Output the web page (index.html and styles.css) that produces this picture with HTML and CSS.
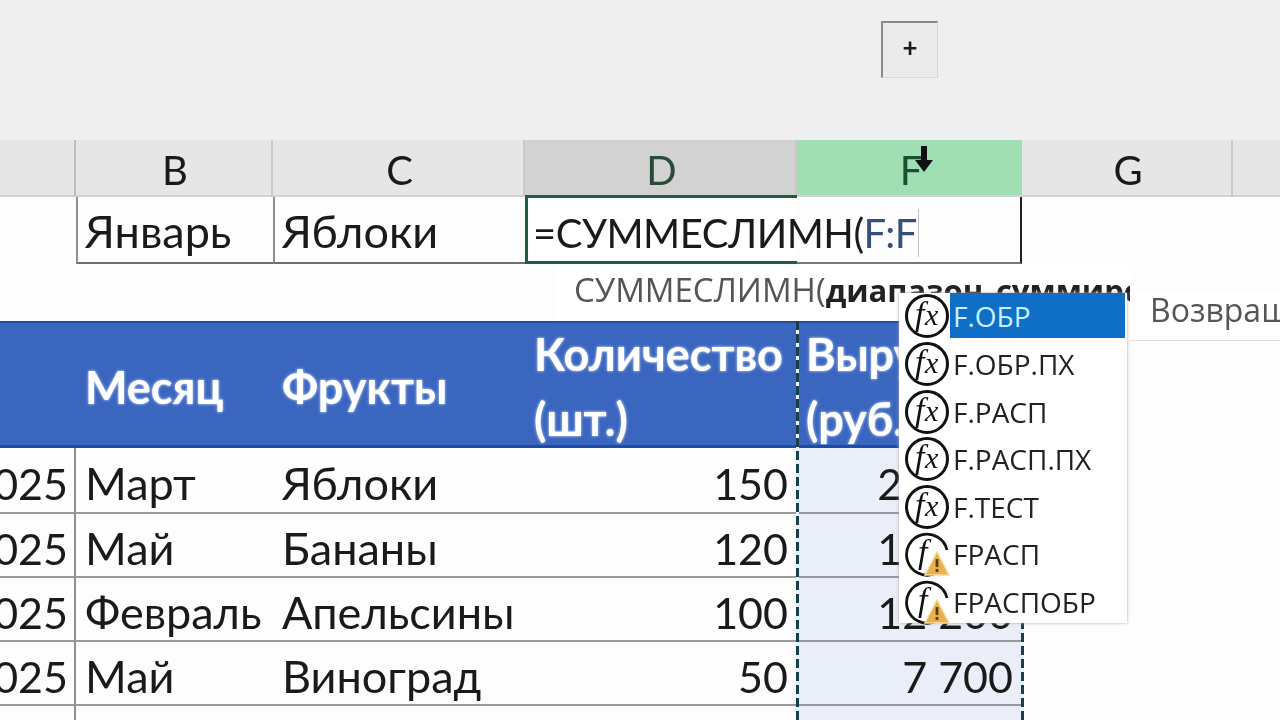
FILE: index.html
```html
<!DOCTYPE html>
<html lang="ru">
<head>
<meta charset="utf-8">
<title>СУММЕСЛИМН</title>
<link rel="stylesheet" href="styles.css">
</head>
<body>
<svg class="icon-defs" width="0" height="0">
  <symbol id="ico-fx" viewBox="0 0 46 46">
    <circle cx="23" cy="23" r="20.5" fill="#fff" stroke="#111" stroke-width="3"/>
    <text x="11" y="32" class="ico-letter">f</text>
    <text x="21" y="32" class="ico-letter ico-x">x</text>
  </symbol>
  <symbol id="ico-warn" viewBox="0 0 46 46">
    <path d="M30 43 A20.5 20.5 0 1 1 43 19" fill="none" stroke="#111" stroke-width="2.8"/>
    <text x="14" y="32" class="ico-letter">f</text>
    <polygon points="33,21 45,44 21,44" fill="#e9b04c" stroke="#f6dc9c" stroke-width="1.5"/>
    <rect x="31.6" y="28" width="2.8" height="8" fill="#5a3d10"/>
    <rect x="31.6" y="38" width="2.8" height="3" fill="#5a3d10"/>
  </symbol>
</svg>

<div class="ribbon">
  <div class="add-btn">+</div>
</div>

<div class="sheet">
  <div class="row col-heads">
    <div class="head"></div>
    <div class="head">B</div>
    <div class="head">C</div>
    <div class="head head-active">D</div>
    <div class="head head-ref">F</div>
    <div class="head">G</div>
    <div class="head"></div>
  </div>

  <div class="row input-row">
    <div class="cell"></div>
    <div class="cell boxed">Январь</div>
    <div class="cell boxed">Яблоки</div>
    <div class="cell edit-cell">=СУММЕСЛИМН(<span class="ref">F:F</span></div>
    <div class="cell edit-tail"></div>
    <div class="cell"></div>
    <div class="cell"></div>
  </div>

  <div class="row gap-row"></div>

  <div class="row table-head">
    <div class="th"></div>
    <div class="th">Месяц</div>
    <div class="th">Фрукты</div>
    <div class="th">Количество<br>(шт.)</div>
    <div class="th">Выручка<br>(руб.)</div>
    <div class="plain"></div>
    <div class="plain"></div>
  </div>

  <div class="row data-row data-first">
    <div class="cell year">2025</div>
    <div class="cell">Март</div>
    <div class="cell">Яблоки</div>
    <div class="cell num">150</div>
    <div class="cell num sum">23 100</div>
    <div class="plain"></div>
    <div class="plain"></div>
  </div>
  <div class="row data-row">
    <div class="cell year">2025</div>
    <div class="cell">Май</div>
    <div class="cell">Бананы</div>
    <div class="cell num">120</div>
    <div class="cell num sum">18 480</div>
    <div class="plain"></div>
    <div class="plain"></div>
  </div>
  <div class="row data-row">
    <div class="cell year">2025</div>
    <div class="cell">Февраль</div>
    <div class="cell">Апельсины</div>
    <div class="cell num">100</div>
    <div class="cell num sum">12 200</div>
    <div class="plain"></div>
    <div class="plain"></div>
  </div>
  <div class="row data-row">
    <div class="cell year">2025</div>
    <div class="cell">Май</div>
    <div class="cell">Виноград</div>
    <div class="cell num">50</div>
    <div class="cell num sum">7 700</div>
    <div class="plain"></div>
    <div class="plain"></div>
  </div>
  <div class="row data-row data-end">
    <div class="cell year"></div>
    <div class="cell"></div>
    <div class="cell"></div>
    <div class="cell"></div>
    <div class="cell sum"></div>
    <div class="plain"></div>
    <div class="plain"></div>
  </div>
</div>

<!-- things lying over the grid -->
<svg class="cursor" viewBox="0 0 18 26"><path d="M6 0h6v14h6L9 26 0 14h6z" fill="#111"/></svg>
<div class="ants ants-left"></div>
<div class="ants ants-right"></div>

<div class="hint">СУММЕСЛИМН(<b>диапазон_суммирования</b></div>

<div class="menu">
  <div class="item item-on"><svg class="ico"><use href="#ico-fx"/></svg><span class="label">F.ОБР</span></div>
  <div class="item"><svg class="ico"><use href="#ico-fx"/></svg><span class="label">F.ОБР.ПХ</span></div>
  <div class="item"><svg class="ico"><use href="#ico-fx"/></svg><span class="label">F.РАСП</span></div>
  <div class="item"><svg class="ico"><use href="#ico-fx"/></svg><span class="label">F.РАСП.ПХ</span></div>
  <div class="item"><svg class="ico"><use href="#ico-fx"/></svg><span class="label">F.ТЕСТ</span></div>
  <div class="item"><svg class="ico"><use href="#ico-warn"/></svg><span class="label">FРАСП</span></div>
  <div class="item"><svg class="ico"><use href="#ico-warn"/></svg><span class="label">FРАСПОБР</span></div>
</div>

<div class="desc">Возвращает</div>
</body>
</html>
```

FILE: styles.css
```css
* {
  box-sizing: border-box;
}

body {
  margin: 0;
  width: 1280px;
  height: 720px;
  overflow: hidden;
  position: relative;
  background: #fdfdfd;
  color: #1a1a1a;
  font-family: "Lato", "Open Sans", sans-serif;
  font-size: 45px;
  filter: blur(0.5px);
}

.icon-defs {
  position: absolute;
}

.ico-letter {
  font-family: "Liberation Serif", serif;
  font-style: italic;
  font-size: 34px;
  fill: #111;
}

.ico-x {
  font-size: 30px;
}

/* top strip with the plus button */
.ribbon {
  height: 140px;
  padding: 21px 0 0 881px;
  background: #efefef;
}

.add-btn {
  width: 57px;
  height: 57px;
  padding-bottom: 6px;
  display: flex;
  align-items: center;
  justify-content: center;
  background: #ebebeb;
  border-top: 2px solid #8a8a8a;
  border-left: 2px solid #8a8a8a;
  border-right: 1px solid #d8d8d8;
  border-bottom: 1px solid #d8d8d8;
  font-size: 26px;
  font-weight: 700;
}

/* same columns for all rows */
.row {
  display: grid;
  grid-template-columns: 76px 197px 252px 272px 225px 211px 47px;
}

.col-heads {
  height: 57px;
}

.head {
  display: flex;
  align-items: center;
  justify-content: center;
  padding: 5px 0 0 3px;
  background: #e6e6e6;
  border-right: 2px solid #c9c9c9;
  border-bottom: 2px solid #d2d2d2;
  font-size: 40px;
}

.head:first-child {
  border-right-color: #bdbdbd;
}

.head:last-child {
  border-right: 0;
}

.head-active {
  background: #d2d2d2;
  color: #2b4a38;
}

.head-ref {
  background: #a0dfb4;
  color: #1b4f33;
  border-right: 0;
}

.input-row {
  height: 67px;
}

.cell {
  display: flex;
  align-items: center;
  padding: 6px 9px 0;
  white-space: nowrap;
  min-width: 0;
}

.boxed {
  padding-top: 2px;
  padding-left: 7px;
  border-left: 2px solid #8f8f8f;
  border-bottom: 2px solid #6f6f6f;
}

.edit-cell {
  padding-left: 5px;
  border: 3px solid #1f5f3c;
  border-right: 0;
  margin-top: -2px;
  background: #fff;
  z-index: 1;
  font-size: 40px;
  letter-spacing: -0.5px;
}

.ref {
  padding-right: 1px;
  border-right: 1px solid #c4c4c4;
  color: #35507f;
}

.edit-tail {
  border-right: 2px solid #222;
  border-bottom: 2px solid #777;
}

.gap-row {
  height: 57px;
}

.table-head {
  height: 127px;
}

.th {
  display: flex;
  align-items: center;
  padding: 6px 9px 0;
  background: #3b66c0;
  border-top: 2px solid #1f4ea3;
  border-bottom: 3px solid #1c4ca8;
  color: #fff;
  font-weight: 700;
  line-height: 65px;
  text-shadow: 0 0 3px #dff0ff;
  white-space: nowrap;
  overflow: hidden;
}

.data-row {
  height: 64px;
}

.data-first {
  height: 66px;
}

.data-end {
  height: 14px;
}

.data-row .cell {
  border-bottom: 2px solid #9a9a9a;
}

.data-end .cell {
  border-bottom: 0;
}

.data-row .cell:first-child {
  border-right: 2px solid #8f8f8f;
}

.year {
  justify-content: flex-end;
  overflow: hidden;
  padding-right: 6px;
  font-size: 43px;
}

.num {
  justify-content: flex-end;
  font-size: 43px;
}

.sum {
  background: #e9eef9;
}

.plain {
  background: #fdfdfd;
}

/* overlays */
.cursor {
  position: absolute;
  left: 915px;
  top: 146px;
  width: 18px;
  height: 26px;
}

.ants {
  position: absolute;
  top: 321px;
  width: 3px;
  height: 399px;
  background: repeating-linear-gradient(#17404f 0 9px, #e9f3fb 9px 13px);
}

.ants-left {
  left: 796px;
}

.ants-right {
  left: 1021px;
}

.hint {
  position: absolute;
  left: 555px;
  top: 265px;
  width: 575px;
  height: 56px;
  padding: 2px 0 0 19px;
  overflow: hidden;
  background: #fff;
  color: #555;
  font-family: "Open Sans", sans-serif;
  font-size: 33px;
  white-space: nowrap;
}

.hint b {
  color: #222;
  font-size: 31px;
}

.menu {
  position: absolute;
  left: 899px;
  top: 293px;
  width: 228px;
  height: 330px;
  padding: 0 2px 0 5px;
  background: #fff;
  box-shadow: 0 0 3px #a9a9a9;
}

.item {
  display: flex;
  align-items: center;
  height: 47.5px;
  color: #222;
  font-family: "Open Sans", sans-serif;
  font-size: 28px;
  font-weight: 500;
}

.ico {
  width: 46px;
  height: 46px;
  flex: none;
}

.label {
  flex: 1;
  padding-left: 3px;
  white-space: nowrap;
}

.item-on .label {
  align-self: stretch;
  display: flex;
  align-items: center;
  background: #0f6fc6;
  color: #c8f0ff;
}

.item-on {
  height: 45px;
  margin-bottom: 2.5px;
}

.desc {
  position: absolute;
  left: 1130px;
  top: 291px;
  width: 150px;
  height: 50px;
  padding: 0 0 0 20px;
  overflow: hidden;
  background: #fff;
  border-bottom: 1px solid #e2e2e2;
  color: #555;
  font-family: "Open Sans", sans-serif;
  font-size: 32px;
  line-height: 38px;
  white-space: nowrap;
}
```
